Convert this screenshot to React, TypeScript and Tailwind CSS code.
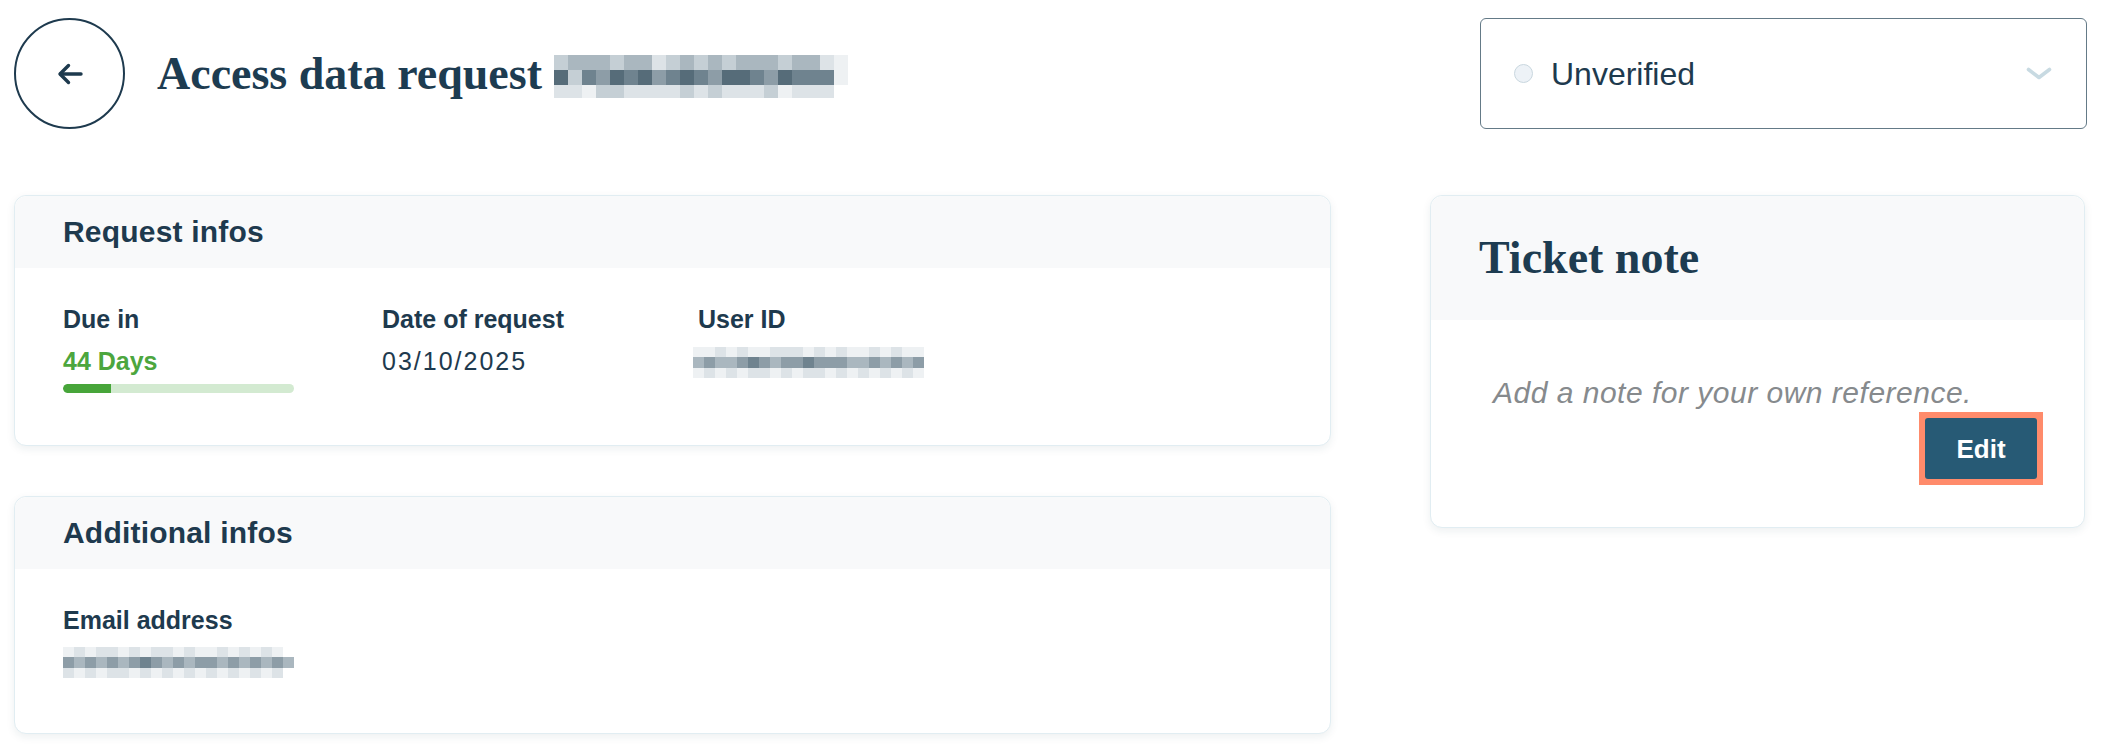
import React from "react";

const shade: Record<string, string> = {
  "0": "bg-white",
  "1": "bg-[#eef1f3]",
  "2": "bg-[#dde3e7]",
  "3": "bg-[#c5cfd5]",
  "4": "bg-[#aab7bf]",
  "5": "bg-[#8d9da7]",
  "6": "bg-[#6f838f]",
  "7": "bg-[#566c79]",
};

function Mosaic({
  rows,
  cellClass,
  rowClasses,
}: {
  rows: string[];
  cellClass: string;
  rowClasses: string[];
}) {
  return (
    <div className="flex flex-col">
      {rows.map((r, i) => (
        <div key={i} className={`flex ${rowClasses[i]}`}>
          {r.split("").map((c, j) => (
            <div key={j} className={`${shade[c]} ${cellClass} h-full`} />
          ))}
        </div>
      ))}
    </div>
  );
}

function CardHeader({ children }: { children: React.ReactNode }) {
  return (
    <div className="h-[72px] flex items-center bg-[#f8f9fa] pl-[48px] rounded-t-[12px]">
      <h2 className="text-[30px] leading-[30px] font-bold text-[#1e3a4e] tracking-[0.2px]">{children}</h2>
    </div>
  );
}

function Label({ children }: { children: React.ReactNode }) {
  return <div className="text-[25px] leading-[30px] font-bold text-[#1e3a4e]">{children}</div>;
}

export default function App() {
  return (
    <div className="min-h-[745px] bg-white pt-[18px] pl-[14px] pr-[18px] font-['Liberation_Sans',Arial,sans-serif] text-[#1e3a4e]">
      {/* Header */}
      <div className="flex items-center justify-between h-[111px]">
        <div className="flex items-center">
          <button className="w-[111px] h-[111px] rounded-full border-2 border-[#1e3a4e] flex items-center justify-center bg-white">
            <svg width="26" height="22" viewBox="0 0 26 22" fill="none">
              <path d="M24 11H3.5" stroke="#1e3a4e" strokeWidth="3.4" strokeLinecap="round" />
              <path d="M11.5 2.5L3 11l8.5 8.5" stroke="#1e3a4e" strokeWidth="3.4" strokeLinecap="round" strokeLinejoin="round" />
            </svg>
          </button>
          <h1 className="ml-[32px] font-['Liberation_Serif',serif] font-bold text-[46px] leading-[46px] text-[#1d3c51]">
            Access data request
          </h1>
          <div className="ml-[12px] mt-[6px]">
            <Mosaic
              rows={[
                "344434423434344434421",
                "736576756765776576661",
                "221332222323222312220",
              ]}
              cellClass="w-[14px]"
              rowClasses={["h-[15px]", "h-[15px]", "h-[13px]"]}
            />
          </div>
        </div>
        <div className="flex items-center h-[111px] w-[607px] border-[1.5px] border-[#647a87] rounded-[6px] pl-[33px] pr-[34px]">
          <div className="w-[19px] h-[19px] rounded-full bg-[#edf2f7] border-[1.5px] border-[#c9d7df]" />
          <span className="ml-[18px] text-[32px] leading-[32px] text-[#1e3a4e]">Unverified</span>
          <svg className="ml-auto" width="26" height="13" viewBox="0 0 26 13" fill="none">
            <path d="M2.5 2.5L13 10.5 23.5 2.5" stroke="#c8dae2" strokeWidth="3.6" strokeLinecap="round" strokeLinejoin="round" />
          </svg>
        </div>
      </div>

      {/* Main */}
      <div className="mt-[66px] flex justify-between items-start">
        <div className="w-[1317px] flex flex-col gap-[50px]">
          <div className="border border-[#e1edf2] rounded-[12px] bg-white shadow-[0_3px_8px_rgba(30,58,78,0.08)]">
            <CardHeader>Request infos</CardHeader>
            <div className="pl-[48px] pt-[36px] pb-[52px] flex">
              <div className="w-[319px]">
                <Label>Due in</Label>
                <div className="mt-[12px] text-[25px] leading-[30px] font-bold text-[#4ca63e]">44 Days</div>
                <div className="mt-[8px] w-[231px] h-[9px] rounded-full bg-[#d3ead1] overflow-hidden">
                  <div className="w-[48px] h-full bg-[#47a53a] rounded-l-full" />
                </div>
              </div>
              <div className="w-[316px]">
                <Label>Date of request</Label>
                <div className="mt-[12px] text-[25px] leading-[30px] tracking-[2px] text-[#1e3a4e]">03/10/2025</div>
              </div>
              <div>
                <Label>User ID</Label>
                <div className="mt-[13px] -ml-[5px]">
                  <Mosaic
                    rows={[
                      "112121122212121121211",
                      "454456545565554454545",
                      "121212212122121212121",
                    ]}
                    cellClass="w-[11px]"
                    rowClasses={["h-[10px]", "h-[11px]", "h-[10px]"]}
                  />
                </div>
              </div>
            </div>
          </div>

          <div className="border border-[#e1edf2] rounded-[12px] bg-white shadow-[0_3px_8px_rgba(30,58,78,0.08)]">
            <CardHeader>Additional infos</CardHeader>
            <div className="pl-[48px] pt-[36px] pb-[55px]">
              <Label>Email address</Label>
              <div className="mt-[12px]">
                <Mosaic
                  rows={[
                    "121221212212112121210",
                    "545454565454554545454",
                    "212122121212121212120",
                  ]}
                  cellClass="w-[11px]"
                  rowClasses={["h-[10px]", "h-[11px]", "h-[10px]"]}
                />
              </div>
            </div>
          </div>
        </div>

        <div className="w-[655px] mr-[2px] border border-[#e1edf2] rounded-[12px] bg-white shadow-[0_3px_8px_rgba(30,58,78,0.08)]">
          <div className="h-[124px] flex items-center bg-[#f8f9fa] pl-[48px] rounded-t-[12px]">
            <h2 className="font-['Liberation_Serif',serif] font-bold text-[46px] leading-[46px] text-[#1d3c51]">
              Ticket note
            </h2>
          </div>
          <div className="pt-[55px] pb-[42px] pl-[62px] pr-[41px]">
            <p className="italic text-[30px] leading-[36px] tracking-[0.5px] text-[#868a8d]">Add a note for your own reference.</p>
            <div className="mt-[1px] flex justify-end">
              <div className="bg-[#ff8b6b] p-[6px]">
                <button className="w-[112px] h-[61px] bg-[#275a75] rounded-[3px] text-white font-bold text-[26px] leading-[26px]">
                  Edit
                </button>
              </div>
            </div>
          </div>
        </div>
      </div>
    </div>
  );
}
